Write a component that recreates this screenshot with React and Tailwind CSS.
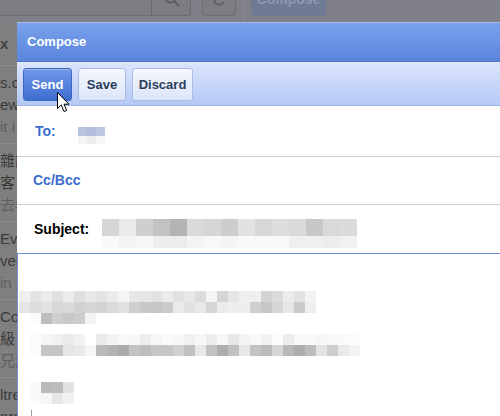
import React from "react";

/** Pixelated (mosaic) blocks standing in for blurred-out text. */
function Mosaic({ rows, w, h, className = "" }) {
  return (
    <div className={`flex flex-col ${className}`}>
      {rows.map((row, i) => (
        <div key={i} className="flex">
          {row.map((c, j) => (
            <div
              key={j}
              style={{ width: w, height: Array.isArray(h) ? h[i] : h, background: c }}
            />
          ))}
        </div>
      ))}
    </div>
  );
}

const subjectRows = [
  ["#d6d6d6", "#ebebeb", "#cfcfcf", "#c2c2c2", "#b3b3b3", "#dadada", "#d6d6d6", "#cdcdcd", "#e2e2e2", "#d7d7d7", "#dddddd", "#dadada", "#c8c8c8", "#d9d9d9", "#dbdbdb"],
  ["#fafafa", "#f4f4f4", "#f6f6f6", "#eeeeee", "#ececec", "#f3f3f3", "#f8f8f8", "#f5f5f5", "#f8f8f8", "#f8f8f8", "#f8f8f8", "#efefef", "#efefef", "#ececec", "#f1f1f1"],
];

const toRows = [
  ["#b9c5e0", "#b2bedb", "#bcc7e1"],
  ["#f4f4f4", "#eeeeee", "#f7f7f7"],
];

const line1 = [
  ["#efefef", "#e4e4e4", "#ececec", "#e0e0e0", "#ececec", "#dedede", "#e8e8e8", "#e4e4e4", "#ebebeb", "#f5f5f5", "#e7e7e7", "#e6e6e6", "#e2e2e2", "#ebebeb", "#e1e1e1", "#e8e8e8", "#dcdcdc", "#f4f4f4", "#d5d5d5", "#e6e6e6", "#efefef", "#efefef", "#d3d3d3", "#dbdbdb", "#ececec", "#e2e2e2", "#f2f2f2"],
  ["#e5e5e5", "#dcdcdc", "#e3e3e3", "#d8d8d8", "#dadada", "#d2d2d2", "#d6d6d6", "#d2d2d2", "#dadada", "#e0e0e0", "#cfcfcf", "#c8c8c8", "#c6c6c6", "#cacaca", "#eaeaea", "#e1e1e1", "#e8e8e8", "#d5d5d5", "#ececec", "#eeeeee", "#eeeeee", "#cfcfcf", "#c6c6c6", "#d6d6d6", "#e6e6e6", "#cacaca", "#eeeeee"],
];

const line2 = [["#fafafa", "#bdbdbd", "#cfcfcf", "#c8c8c8", "#cdcdcd", "#f3f3f3"]];

const line3 = [
  ["#fbfbfb", "#f6f6f6", "#f1f1f1", "#ebebeb", "#f2f2f2", "#ffffff", "#ebebeb", "#f3f3f3", "#f9f9f9", "#f7f7f7", "#eeeeee", "#f6f6f6", "#fbfbfb", "#f7f7f7", "#f1f1f1", "#f7f7f7", "#ececec", "#f7f7f7", "#e7e7e7", "#f3f3f3", "#f9f9f9", "#f2f2f2", "#fcfcfc", "#ededed", "#f9f9f9", "#f8f8f8", "#f6f6f6", "#f8f8f8", "#fafafa", "#fbfbfb"],
  ["#fafafa", "#c6c6c6", "#c5c5c5", "#e6e6e6", "#e9e9e9", "#f6f6f6", "#b9b9b9", "#b3b3b3", "#ababab", "#c3c3c3", "#bdbdbd", "#c6c6c6", "#c6c6c6", "#d1d1d1", "#c0c0c0", "#e8e8e8", "#c2c2c2", "#aeaeae", "#c1c1c1", "#e8e8e8", "#c3c3c3", "#bcbcbc", "#d6d6d6", "#b8b8b8", "#adadad", "#bcbcbc", "#e3e3e3", "#cdcdcd", "#e9e9e9", "#f3f3f3"],
];

const line4 = [
  ["#fafafa", "#bababa", "#bcbcbc", "#e2e2e2"],
  ["#fafafa", "#f5f5f5", "#e6e6e6", "#f1f1f1"],
];

// Email list fragments peeking out at the left, under the dim overlay
const listGroups = [
  { rows: [["s.c", "dark"], ["ew", "dark"], ["it i", "light"]] },
  { rows: [["雜誌", "dark"], ["客", "dark"], ["去看", "light"]] },
  { rows: [["Eve", "dark"], ["ver", "dark"], ["in", "light"]] },
  { rows: [["Co", "dark"], ["級", "dark"], ["兄您", "light"]] },
  { rows: [["ltre", "dark"], ["nre", "dark"]] },
];

function Button({ children, primary, width }) {
  return (
    <button
      className={`${width} h-[33px] rounded-[3px] text-center text-[13px] font-bold ${
        primary
          ? "border border-[#3a66c4] bg-gradient-to-b from-[#7099e8] to-[#3e6dcf] text-white shadow-[inset_0_1px_0_rgba(255,255,255,0.3)]"
          : "border border-[#a9bde8] bg-gradient-to-b from-[#f4f7fe] to-[#dce5f9] text-[#2d3d5c]"
      }`}
    >
      {children}
    </button>
  );
}

export default function App() {
  return (
    <div className="relative flex h-[416px] w-[500px] flex-col overflow-hidden bg-[#7f7f7f] font-['Liberation_Sans',Arial,'Noto_Sans_CJK_TC',sans-serif]">
      {/* Dimmed top bar */}
      <div className="flex h-[22px] shrink-0 items-start bg-[#7f8087]">
        <div className="-ml-px h-[16px] w-[153px] rounded-bl-[3px] border border-t-0 border-[#6c6d72] bg-[#7d7e83]" />
        <div className="flex h-[16px] w-[39px] justify-center overflow-hidden rounded-br-[3px] border border-t-0 border-l-0 border-[#6c6d72] bg-[#7c7d82]">
          <svg width="18" height="18" viewBox="0 0 18 18" className="-mt-[10px] ml-[2px]" fill="none" stroke="#5a5b60" strokeWidth="2">
            <circle cx="7.5" cy="7.5" r="5" />
            <path d="M11 11 L16 16" />
          </svg>
        </div>
        <div className="ml-[11px] flex h-[16px] w-[34px] justify-center overflow-hidden rounded-b-[4px] border border-t-0 border-[#6c6d72] bg-[#7c7d82]">
          <svg width="14" height="14" viewBox="0 0 14 14" className="-mt-[7px]" fill="none" stroke="#5f6065" strokeWidth="1.8">
            <path d="M11.5 9 A5 5 0 1 1 11 3.5" />
          </svg>
        </div>
        <div className="ml-[8px] h-[22px] w-px bg-[#898a90]" />
        <div className="ml-[6px] flex h-[16px] w-[75px] items-start justify-center overflow-hidden rounded-b-[4px] bg-[#6f7a94]">
          <span className="-mt-[8px] text-[14px] font-bold leading-[14px] text-[#8e98b0]">Compose</span>
        </div>
      </div>

      <div className="flex min-h-0 flex-1">
        {/* Dimmed email list strip */}
        <div className="w-[17px] shrink-0 overflow-hidden whitespace-nowrap text-[15px] leading-none">
          <div className="flex h-[44px] items-center border-b border-[#8b8b8b]">
            <span className="font-bold text-[#3f3f3f]">x</span>
          </div>
          {listGroups.map((g, i) => (
            <div key={i} className="flex flex-col gap-[5px] border-b border-[#8b8b8b] pb-[7px] pt-[9px]">
              {g.rows.map(([t, tone], j) => (
                <div
                  key={j}
                  className={`h-[17px] ${tone === "dark" ? "text-[#3a3a3a]" : "text-[#5e5e5e]"}`}
                >
                  {t}
                </div>
              ))}
            </div>
          ))}
        </div>

        {/* Compose window */}
        <div className="flex min-w-0 flex-1 flex-col bg-white">
          <div className="flex h-[40px] shrink-0 items-center border-t border-b border-t-[#a6b9e0] border-b-[#4874cd] bg-gradient-to-b from-[#79a2ed] to-[#5985db] pl-[10px]">
            <span className="text-[13px] font-bold text-white">Compose</span>
          </div>
          <div className="flex h-[44px] shrink-0 items-start gap-[6px] border-t border-b border-t-[#e3eafc] border-b-[#9db4ea] bg-gradient-to-b from-[#dbe4fa] to-[#b5c9f5] pl-[6px] pt-[5px]">
            <Button primary width="w-[49px]">Send</Button>
            <Button width="w-[48px]">Save</Button>
            <Button width="w-[61px]">Discard</Button>
          </div>

          <div className="flex h-[51px] shrink-0 items-center border-b border-[#d0d0d0] pl-[18px]">
            <span className="w-[43px] text-[14px] font-bold text-[#3b6cd0]">To:</span>
            <Mosaic rows={toRows} w={9} h={[9, 8]} className="mt-[9px]" />
          </div>
          <div className="flex h-[48px] shrink-0 items-center border-b border-[#d0d0d0] pl-[16px]">
            <span className="text-[14px] font-bold text-[#3b6cd0]">Cc/Bcc</span>
          </div>
          <div className="flex h-[48px] shrink-0 items-center pl-[17px]">
            <span className="w-[68px] text-[14px] font-bold text-black">Subject:</span>
            <Mosaic rows={subjectRows} w={17} h={[17, 12]} className="mt-[9px]" />
          </div>

          {/* Message body */}
          <div className="relative flex-1 border-t border-l border-[#6a91dc] pt-[37px]">
            <Mosaic rows={line1} w={11} h={11} className="ml-[1px]" />
            <Mosaic rows={line2} w={11} h={11} className="ml-[12px]" />
            <Mosaic rows={line3} w={11} h={11} className="ml-[12px] mt-[10px]" />
            <Mosaic rows={line4} w={11} h={11} className="ml-[12px] mt-[26px]" />
            <div className="ml-[13px] mt-[6px] h-[6px] w-px bg-[#9a9a9a]" />
          </div>
        </div>
      </div>

      {/* Mouse pointer */}
      <svg
        className="absolute left-[57px] top-[92px]"
        width="14"
        height="21"
        viewBox="0 0 14 21"
      >
        <path
          d="M0.5 0.5 L0.5 16.5 L4.3 13 L7 19.5 L9.6 18.4 L7 12.2 L12 12.2 Z"
          fill="white"
          stroke="black"
          strokeWidth="1"
          strokeLinejoin="round"
        />
      </svg>
    </div>
  );
}
